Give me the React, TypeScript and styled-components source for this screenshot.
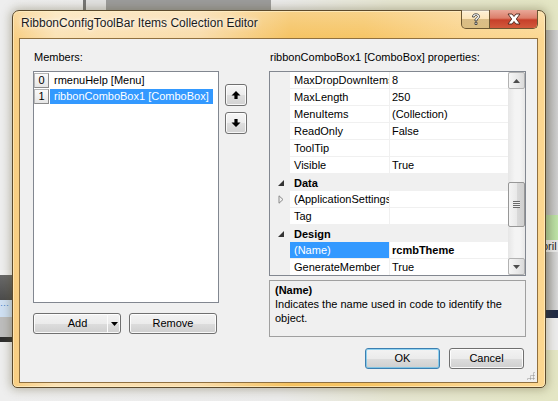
import React from "react";
import styled, { createGlobalStyle } from "styled-components";

const GlobalStyle = createGlobalStyle`
  html, body {
    margin: 0;
    padding: 0;
  }
  body {
    width: 558px;
    height: 401px;
    overflow: hidden;
    font-family: "Liberation Sans", Arial, sans-serif;
  }
`;

const members = [
  { idx: "0", label: "rmenuHelp [Menu]", selected: false },
  { idx: "1", label: "ribbonComboBox1 [ComboBox]", selected: true },
];

type PropRow =
  | {
      kind: "prop";
      name: string;
      value?: string;
      selected?: boolean;
      boldValue?: boolean;
      expandable?: boolean;
    }
  | { kind: "cat"; name: string };

const properties: PropRow[] = [
  { kind: "prop", name: "MaxDropDownItems", value: "8" },
  { kind: "prop", name: "MaxLength", value: "250" },
  { kind: "prop", name: "MenuItems", value: "(Collection)" },
  { kind: "prop", name: "ReadOnly", value: "False" },
  { kind: "prop", name: "ToolTip" },
  { kind: "prop", name: "Visible", value: "True" },
  { kind: "cat", name: "Data" },
  { kind: "prop", name: "(ApplicationSettings)", expandable: true },
  { kind: "prop", name: "Tag" },
  { kind: "cat", name: "Design" },
  { kind: "prop", name: "(Name)", value: "rcmbTheme", selected: true, boldValue: true },
  { kind: "prop", name: "GenerateMember", value: "True" },
];

/* ---------- desktop behind the dialog ---------- */

const Desktop = styled.div`
  position: relative;
  width: 558px;
  height: 401px;
  overflow: hidden;
  background: linear-gradient(90deg, #eeeeee 0%, #ebebeb 50%, #e6e6d2 70%, #e4e6c4 100%);
`;

const TopToolStrip = styled.div`
  position: absolute;
  left: 83px;
  top: 0;
  width: 185px;
  height: 10px;
  border-left: 3px solid #767676;
  background: linear-gradient(90deg, #e2e2e2 0 20px, #9c9c9c 20px 100%);
`;

const LeftAppPanel = styled.div`
  position: absolute;
  left: 0;
  top: 270px;
  width: 14px;
  height: 72px;
  display: flex;
  flex-direction: column;
`;

const LeftAppBand = styled.div<{ $h: number; $bg: string }>`
  height: ${(p) => p.$h}px;
  background: ${(p) => p.$bg};
  color: #3a7cc8;
  font-size: 9px;
  line-height: 10px;
  overflow: hidden;
`;

const RightAppPanel = styled.div`
  position: absolute;
  left: 538px;
  top: 30px;
  width: 20px;
  height: 320px;
  display: flex;
  flex-direction: column;
  background: linear-gradient(90deg, #8a8a8a, #c8c8c8);
`;

const RightAppCell = styled.div<{ $h: number; $bg: string }>`
  height: ${(p) => p.$h}px;
  background: ${(p) => p.$bg};
  font-size: 11px;
  line-height: 12px;
  color: #222;
  display: flex;
  align-items: center;
  padding-left: 4px;
  overflow: hidden;
  white-space: nowrap;
`;

/* ---------- window frame ---------- */

const Window = styled.div`
  position: absolute;
  left: 12px;
  top: 10px;
  width: 534px;
  height: 378px;
  box-sizing: border-box;
  border: 1px solid #5c4a2c;
  border-radius: 7px 7px 5px 5px;
  padding: 0 7px 4px 6px;
  display: flex;
  flex-direction: column;
  background:
    linear-gradient(180deg, rgba(255, 255, 255, 0.25) 0px, rgba(255, 255, 255, 0) 30px),
    linear-gradient(
      90deg,
      #f8cd80 0%,
      #fbe2b4 8%,
      #f9dcaa 35%,
      #f5c260 52%,
      #f6c463 66%,
      #fad38a 85%,
      #fcd790 100%
    );
  box-shadow: 0 0 10px 2px rgba(90, 80, 40, 0.35), inset 0 0 0 1px rgba(255, 240, 200, 0.7);
`;

const TitleBar = styled.div`
  height: 27px;
  display: flex;
  align-items: flex-start;
`;

const TitleText = styled.div`
  flex: 1;
  padding: 5px 0 0 2px;
  font-family: "Liberation Sans", Arial, sans-serif;
  font-size: 12px;
  line-height: 15px;
  color: #1b1b1b;
  text-shadow: 0 0 6px rgba(255, 255, 255, 0.95), 0 0 3px rgba(255, 255, 255, 0.9);
  white-space: nowrap;
`;

const CaptionButtons = styled.div`
  display: flex;
  margin-top: -1px;
  height: 18px;
  border: 1px solid #6b5632;
  border-top: none;
  border-radius: 0 0 5px 5px;
  overflow: hidden;
`;

const HelpButton = styled.div`
  width: 27px;
  display: flex;
  align-items: center;
  justify-content: center;
  border-right: 1px solid #6b5632;
  background: linear-gradient(180deg, rgba(255, 255, 255, 0.55) 0%, rgba(255, 255, 255, 0.25) 50%, rgba(120, 100, 60, 0.25) 51%, rgba(160, 140, 90, 0.35) 100%);
`;

const CloseButton = styled.div`
  width: 47px;
  display: flex;
  align-items: center;
  justify-content: center;
  background: linear-gradient(180deg, #e9a898 0%, #dc7e6a 45%, #c7402a 55%, #d35a3c 100%);
`;

const Client = styled.div`
  position: relative;
  flex: 1;
  box-sizing: border-box;
  border: 1px solid #8f7040;
  background: #f0f0f0;
  padding: 11px 13px 0 13px;
  display: flex;
  flex-direction: column;
  font-family: "Liberation Sans", Arial, sans-serif;
  font-size: 11px;
  color: #000;
`;

const Main = styled.div`
  display: flex;
  align-items: flex-start;
`;

const Column = styled.div`
  display: flex;
  flex-direction: column;
`;

const FieldLabel = styled.div`
  height: 14px;
  line-height: 14px;
  margin-bottom: 7px;
  padding-left: 1px;
  white-space: nowrap;
`;

/* ---------- members list ---------- */

const ListBox = styled.div`
  width: 186px;
  height: 232px;
  box-sizing: border-box;
  border: 1px solid #828790;
  background: #fff;
  padding: 1px 0 0 0;
  display: flex;
  flex-direction: column;
  gap: 1px;
`;

const ListRow = styled.div`
  display: flex;
  height: 15px;
  gap: 1px;
`;

const IndexCell = styled.div`
  width: 15px;
  height: 15px;
  box-sizing: border-box;
  border: 1px solid #b5b5b5;
  border-right-color: #8a8a8a;
  border-bottom-color: #8a8a8a;
  background: linear-gradient(#fafafa, #e6e6e6);
  text-align: center;
  line-height: 13px;
`;

const ItemLabel = styled.div<{ $selected: boolean }>`
  padding: 0 4px 0 4px;
  line-height: 15px;
  white-space: nowrap;
  background: ${(p) => (p.$selected ? "#3399ff" : "transparent")};
  color: ${(p) => (p.$selected ? "#fff" : "#000")};
`;

const ArrowColumn = styled.div`
  display: flex;
  flex-direction: column;
  gap: 6px;
  margin: 34px 22px 0 6px;
`;

const ArrowButton = styled.div`
  width: 22px;
  height: 22px;
  box-sizing: border-box;
  border: 1px solid #707070;
  border-radius: 3px;
  background: linear-gradient(#f6f6f6 0%, #ececec 50%, #dedede 51%, #d2d2d2 100%);
  box-shadow: inset 0 0 0 1px rgba(255, 255, 255, 0.8);
  display: flex;
  align-items: center;
  justify-content: center;
`;

const ButtonRow = styled.div`
  display: flex;
  gap: 8px;
  margin-top: 10px;
`;

const PushButton = styled.div<{ $width: number; $default?: boolean }>`
  width: ${(p) => p.$width}px;
  height: 21px;
  box-sizing: border-box;
  border: 1px solid ${(p) => (p.$default ? "#3c7fb1" : "#707070")};
  border-radius: 3px;
  background: linear-gradient(#f3f3f3 0%, #ebebeb 50%, #dddddd 51%, #cfcfcf 100%);
  box-shadow: inset 0 0 0 1px ${(p) => (p.$default ? "rgba(80, 190, 240, 0.6)" : "rgba(255, 255, 255, 0.85)")};
  display: flex;
  align-items: center;
  justify-content: center;
  line-height: 19px;
  color: #000;
`;

const SplitMain = styled.div`
  flex: 1;
  text-align: center;
  padding-left: 14px;
  border-right: 1px solid #fbfbfb;
  align-self: stretch;
`;

const SplitArrow = styled.div`
  width: 12px;
  display: flex;
  align-items: center;
  justify-content: center;
`;

/* ---------- property grid ---------- */

const PropGrid = styled.div`
  width: 257px;
  height: 205px;
  box-sizing: border-box;
  border: 1px solid #828790;
  background: #fff;
  display: flex;
`;

const RowsArea = styled.div`
  flex: 1;
  display: flex;
  flex-direction: column;
  overflow: hidden;
`;

const PropLine = styled.div`
  display: flex;
  height: 17px;
  flex-shrink: 0;
`;

const MarginCell = styled.div`
  width: 20px;
  background: #f0f0f0;
  display: flex;
  align-items: center;
  padding-left: 8px;
  box-sizing: border-box;
`;

const NameCell = styled.div<{ $selected?: boolean }>`
  width: 100px;
  box-sizing: border-box;
  border-right: 1px solid #f0f0f0;
  border-bottom: 1px solid #f0f0f0;
  padding-left: 4px;
  line-height: 16px;
  white-space: nowrap;
  overflow: hidden;
  text-overflow: clip;
  background: ${(p) => (p.$selected ? "#3399ff" : "#fff")};
  color: ${(p) => (p.$selected ? "#fff" : "#000")};
`;

const ValueCell = styled.div<{ $bold?: boolean }>`
  flex: 1;
  box-sizing: border-box;
  border-bottom: 1px solid #f0f0f0;
  padding-left: 2px;
  line-height: 16px;
  white-space: nowrap;
  overflow: hidden;
  font-weight: ${(p) => (p.$bold ? "bold" : "normal")};
`;

const CategoryLine = styled.div`
  display: flex;
  height: 17px;
  flex-shrink: 0;
  background: #f0f0f0;
  align-items: center;
`;

const CategoryName = styled.div`
  padding-left: 4px;
  font-weight: bold;
  line-height: 16px;
`;

const ScrollBar = styled.div`
  width: 17px;
  display: flex;
  flex-direction: column;
  background: linear-gradient(90deg, #e6e6e6, #f4f4f4 40%, #f4f4f4 70%, #e8e8e8);
`;

const ScrollButton = styled.div`
  height: 17px;
  box-sizing: border-box;
  border: 1px solid #b2b2b2;
  border-radius: 2px;
  background: linear-gradient(90deg, #f6f6f6, #e8e8e8 60%, #dadada);
  display: flex;
  align-items: center;
  justify-content: center;
`;

const ScrollTrack = styled.div`
  flex: 1;
  padding-top: 93px;
`;

const ScrollThumb = styled.div`
  height: 45px;
  box-sizing: border-box;
  border: 1px solid #979797;
  border-radius: 2px;
  background: linear-gradient(90deg, #f4f4f4, #e9e9e9 50%, #d9d9d9 51%, #cfcfcf);
  display: flex;
  align-items: center;
  justify-content: center;
`;

const Grip = styled.div`
  width: 7px;
  height: 7px;
  background: repeating-linear-gradient(180deg, #6a6a6a 0 1px, #f0f0f0 1px 2px);
`;

const DescriptionBox = styled.div`
  width: 257px;
  height: 57px;
  margin-top: 4px;
  box-sizing: border-box;
  border: 1px solid #a0a0a0;
  background: #f0f0f0;
  padding: 2px 5px 0 5px;
  line-height: 14px;
`;

const DescriptionTitle = styled.div`
  font-weight: bold;
`;

const Footer = styled.div`
  display: flex;
  justify-content: flex-end;
  gap: 9px;
  margin-top: 11px;
`;

const SizeGrip = styled.div`
  position: absolute;
  right: 2px;
  bottom: 2px;
  width: 9px;
  height: 9px;
  background:
    radial-gradient(circle, #a8a8a8 0.9px, transparent 1.2px) 0 0 / 3px 3px;
  clip-path: polygon(100% 0, 100% 100%, 0 100%);
`;

/* ---------- glyphs ---------- */

const UpArrow = () => (
  <svg width="10" height="10" viewBox="0 0 10 10">
    <path d="M5 1 L9.5 5.5 H6.6 V9 H3.4 V5.5 H0.5 Z" fill="#000" />
  </svg>
);

const DownArrow = () => (
  <svg width="10" height="10" viewBox="0 0 10 10">
    <path d="M5 9 L9.5 4.5 H6.6 V1 H3.4 V4.5 H0.5 Z" fill="#000" />
  </svg>
);

const SmallTriangle = ({ up, color }: { up?: boolean; color: string }) => (
  <svg width="7" height="4" viewBox="0 0 7 4">
    <polygon points={up ? "3.5,0 7,4 0,4" : "0,0 7,0 3.5,4"} fill={color} />
  </svg>
);

const CollapseGlyph = () => (
  <svg width="6" height="6" viewBox="0 0 6 6">
    <polygon points="6,0 6,6 0,6" fill="#333" />
  </svg>
);

const ExpandGlyph = () => (
  <svg width="6" height="9" viewBox="0 0 6 9">
    <polygon points="1,0.8 5,4.5 1,8.2" fill="none" stroke="#8a8a8a" strokeWidth="1" />
  </svg>
);

const HelpGlyph = () => (
  <svg width="10" height="13" viewBox="0 0 10 13">
    <path
      d="M1.5 4 C1.5 1.5 3 0.8 5 0.8 C7.3 0.8 8.5 2 8.5 3.6 C8.5 5.3 6.5 5.8 6 7 V8 H4 V6.6 C4.3 5 6.5 4.6 6.5 3.6 C6.5 2.8 5.8 2.5 5 2.5 C4 2.5 3.5 3 3.5 4 Z M4 9.3 H6 V11.5 H4 Z"
      fill="#fff"
      stroke="#3d3d3d"
      strokeWidth="0.9"
    />
  </svg>
);

const CloseGlyph = () => (
  <svg width="16" height="12" viewBox="0 0 16 12">
    <path
      d="M2 1 H6 L8 3.5 L10 1 H14 L10.3 6 L14 11 H10 L8 8.5 L6 11 H2 L5.7 6 Z"
      fill="#fff"
      stroke="#4a2418"
      strokeWidth="0.9"
      strokeLinejoin="round"
    />
  </svg>
);

export default function App() {
  return (
    <>
      <GlobalStyle />
      <Desktop>
        <TopToolStrip />
        <LeftAppPanel>
          <LeftAppBand $h={5} $bg="#f2f2f2" />
          <LeftAppBand $h={25} $bg="linear-gradient(#6a6a6a, #4c4c4c)" />
          <LeftAppBand $h={17} $bg="#cfe0f3">···</LeftAppBand>
          <LeftAppBand $h={20} $bg="#bdbdbd" />
          <LeftAppBand $h={5} $bg="#2e2e2e" />
        </LeftAppPanel>
        <RightAppPanel>
          <RightAppCell $h={185} $bg="linear-gradient(90deg, #9a9a9a, #cfcfcf)" />
          <RightAppCell $h={25} $bg="linear-gradient(90deg, #9ab88a, #bfe3a6)" />
          <RightAppCell $h={12} $bg="#e6e6e6">pril</RightAppCell>
          <RightAppCell $h={58} $bg="linear-gradient(90deg, #8f8f8f, #d9d9d9)" />
          <RightAppCell $h={8} $bg="#1f2a44" />
          <RightAppCell $h={32} $bg="#ececec" />
        </RightAppPanel>

        <Window>
          <TitleBar>
            <TitleText>RibbonConfigToolBar Items Collection Editor</TitleText>
            <CaptionButtons>
              <HelpButton>
                <HelpGlyph />
              </HelpButton>
              <CloseButton>
                <CloseGlyph />
              </CloseButton>
            </CaptionButtons>
          </TitleBar>

          <Client>
            <Main>
              <Column>
                <FieldLabel>Members:</FieldLabel>
                <ListBox>
                  {members.map((m) => (
                    <ListRow key={m.idx}>
                      <IndexCell>{m.idx}</IndexCell>
                      <ItemLabel $selected={m.selected}>{m.label}</ItemLabel>
                    </ListRow>
                  ))}
                </ListBox>
                <ButtonRow>
                  <PushButton $width={88}>
                    <SplitMain>Add</SplitMain>
                    <SplitArrow>
                      <SmallTriangle color="#000" />
                    </SplitArrow>
                  </PushButton>
                  <PushButton $width={88}>Remove</PushButton>
                </ButtonRow>
              </Column>

              <ArrowColumn>
                <ArrowButton>
                  <UpArrow />
                </ArrowButton>
                <ArrowButton>
                  <DownArrow />
                </ArrowButton>
              </ArrowColumn>

              <Column>
                <FieldLabel>ribbonComboBox1 [ComboBox] properties:</FieldLabel>
                <PropGrid>
                  <RowsArea>
                    {properties.map((row) =>
                      row.kind === "cat" ? (
                        <CategoryLine key={row.name}>
                          <MarginCell>
                            <CollapseGlyph />
                          </MarginCell>
                          <CategoryName>{row.name}</CategoryName>
                        </CategoryLine>
                      ) : (
                        <PropLine key={row.name}>
                          <MarginCell>{row.expandable && <ExpandGlyph />}</MarginCell>
                          <NameCell $selected={row.selected}>{row.name}</NameCell>
                          <ValueCell $bold={row.boldValue}>{row.value}</ValueCell>
                        </PropLine>
                      )
                    )}
                  </RowsArea>
                  <ScrollBar>
                    <ScrollButton>
                      <SmallTriangle up color="#4d4d4d" />
                    </ScrollButton>
                    <ScrollTrack>
                      <ScrollThumb>
                        <Grip />
                      </ScrollThumb>
                    </ScrollTrack>
                    <ScrollButton>
                      <SmallTriangle color="#4d4d4d" />
                    </ScrollButton>
                  </ScrollBar>
                </PropGrid>
                <DescriptionBox>
                  <DescriptionTitle>(Name)</DescriptionTitle>
                  Indicates the name used in code to identify the object.
                </DescriptionBox>
              </Column>
            </Main>

            <Footer>
              <PushButton $width={75} $default>
                OK
              </PushButton>
              <PushButton $width={75}>Cancel</PushButton>
            </Footer>
            <SizeGrip />
          </Client>
        </Window>
      </Desktop>
    </>
  );
}
